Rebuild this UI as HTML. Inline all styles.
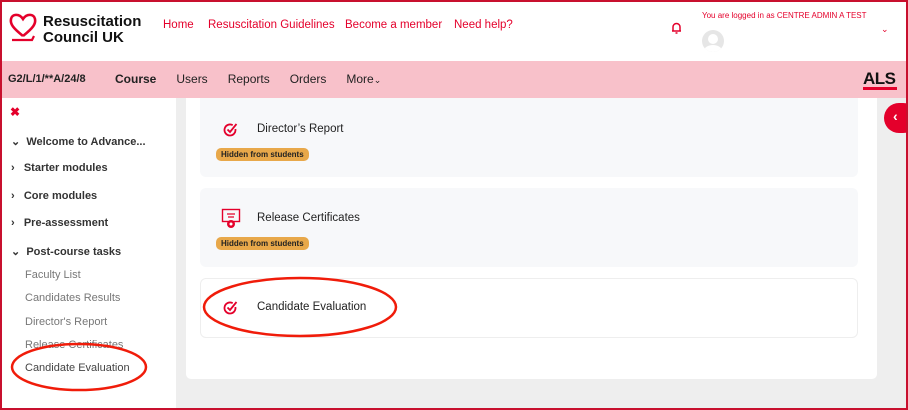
<!DOCTYPE html>
<html><head><style>
*{box-sizing:border-box;margin:0;padding:0}
body{width:908px;height:410px;overflow:hidden;font-family:"Liberation Sans",sans-serif;background:#fff;position:relative}
.frame{position:absolute;inset:0;border:2px solid #c8102e;z-index:50;pointer-events:none}
.hdr{position:absolute;left:0;top:0;width:908px;height:61px;background:#fff}
.nav{position:absolute;left:0;top:61px;width:908px;height:37px;background:#f8c1ca}
.abs{position:absolute;white-space:nowrap}
.side{position:absolute;left:0;top:98px;width:176px;height:312px;background:#fff}
.main{position:absolute;left:176px;top:98px;width:732px;height:312px;background:#eeeeee}
.panel{position:absolute;left:186px;top:98px;width:691px;height:281px;background:#fff;border-radius:0 0 5px 5px}
.card{position:absolute;left:200px;width:658px;background:#f7f8fa;border-radius:6px}
.badge{position:absolute;left:16px;background:#e8a84a;color:#222;font-size:8px;font-weight:bold;padding:2px 5px;border-radius:5px}
.t{font-size:11.5px;color:#222}
.sl{font-size:11px;color:#333;font-weight:bold}
.ss{font-size:11px;color:#777}
.hn{position:absolute;top:19px;font-size:11.5px;color:#e4002b;white-space:nowrap}
</style></head><body>
<div class="hdr"></div>
<svg class="abs" style="left:8px;top:12px" width="30" height="34" viewBox="0 0 30 34"><path d="M15 24 C5 16 2 12 3 7 C4 2 11 1 15 7 C19 1 26 2 27 7 C28 12 25 16 15 24" fill="none" stroke="#e4002b" stroke-width="2.6"/><path d="M4 28 H24 L26 24" fill="none" stroke="#e4002b" stroke-width="2.2"/></svg>
<div class="abs" style="left:43px;top:14px;font-size:15px;font-weight:bold;line-height:16px;color:#111">Resuscitation<br>Council UK</div>
<div class="hn" style="left:163px">Home</div>
<div class="hn" style="left:208px">Resuscitation Guidelines</div>
<div class="hn" style="left:345px">Become a member</div>
<div class="hn" style="left:454px">Need help?</div>
<svg class="abs" style="left:671px;top:22px" width="11" height="12" viewBox="0 0 11 12"><path d="M2 9 V5 a3.5 3.5 0 0 1 7 0 V9 H1 H10 M4.5 11 H6.5" fill="none" stroke="#e4002b" stroke-width="1.5"/></svg>
<div class="abs" style="left:702px;top:11px;font-size:8px;color:#e4002b">You are logged in as CENTRE ADMIN A TEST</div>
<div class="abs" style="left:702px;top:30px;width:22px;height:22px;border-radius:50%;background:#e6e6e6;overflow:hidden"><div style="position:absolute;left:6px;top:4px;width:10px;height:10px;border-radius:50%;background:#fff"></div><div style="position:absolute;left:2px;top:15px;width:18px;height:12px;border-radius:50%;background:#fff"></div></div>
<div class="abs" style="left:881px;top:24px;font-size:9px;color:#e4002b">⌄</div>
<div class="nav"></div>
<div class="abs" style="left:8px;top:73px;font-size:11px;font-weight:bold;color:#222">G2/L/1/**A/24/8</div>
<div class="abs" style="left:115px;top:72px;font-size:12px;color:#222"><b>Course</b>&nbsp;&nbsp;&nbsp;&nbsp;&nbsp;&nbsp;Users&nbsp;&nbsp;&nbsp;&nbsp;&nbsp;&nbsp;Reports&nbsp;&nbsp;&nbsp;&nbsp;&nbsp;&nbsp;Orders&nbsp;&nbsp;&nbsp;&nbsp;&nbsp;&nbsp;More<span style="font-size:9px">⌄</span></div>
<div class="abs" style="left:863px;top:69px;font-size:17px;font-weight:bold;color:#111;letter-spacing:-0.5px">ALS</div>
<div class="abs" style="left:863px;top:87px;width:34px;height:3px;background:#e4002b"></div>
<div class="side"></div>
<div class="abs" style="left:10px;top:105px;font-size:12px;color:#e4002b;font-weight:bold">✖</div>
<div class="abs sl" style="left:11px;top:135px">⌄&nbsp;&nbsp;Welcome to Advance...</div>
<div class="abs sl" style="left:11px;top:162px">›&nbsp;&nbsp;&nbsp;Starter modules</div>
<div class="abs sl" style="left:11px;top:190px">›&nbsp;&nbsp;&nbsp;Core modules</div>
<div class="abs sl" style="left:11px;top:217px">›&nbsp;&nbsp;&nbsp;Pre-assessment</div>
<div class="abs sl" style="left:11px;top:245px">⌄&nbsp;&nbsp;Post-course tasks</div>
<div class="abs ss" style="left:25px;top:269px">Faculty List</div>
<div class="abs ss" style="left:25px;top:292px">Candidates Results</div>
<div class="abs ss" style="left:25px;top:316px">Director's Report</div>
<div class="abs ss" style="left:25px;top:339px">Release Certificates</div>
<div class="abs ss" style="left:25px;top:362px;color:#444">Candidate Evaluation</div>
<div class="main"></div>
<div class="panel"></div>
<div class="card" style="top:98px;height:79px;border-radius:0 0 6px 6px">
<svg class="abs" style="left:22px;top:23px" width="17" height="17" viewBox="0 0 17 17"><path d="M10.7 4.2 A5.5 5.5 0 1 0 13.4 8" fill="none" stroke="#e4002b" stroke-width="1.8"/><path d="M5.5 8.5 L8 11 L14.5 3" fill="none" stroke="#e4002b" stroke-width="1.8"/></svg>
<div class="abs t" style="left:57px;top:25px">Director’s Report</div>
<div class="badge" style="top:50px">Hidden from students</div></div>
<div class="card" style="top:188px;height:79px">
<svg class="abs" style="left:21px;top:20px" width="20" height="22" viewBox="0 0 20 22"><rect x="1.5" y="1.5" width="17" height="12" fill="none" stroke="#e4002b" stroke-width="1.4"/><path d="M6 6 H14 M7 9 H13" stroke="#e4002b" stroke-width="1.2"/><circle cx="10" cy="16" r="4" fill="#e4002b"/><circle cx="10" cy="16" r="1.5" fill="#fff"/></svg>
<div class="abs t" style="left:57px;top:24px">Release Certificates</div>
<div class="badge" style="top:49px">Hidden from students</div></div>
<div class="card" style="top:278px;height:60px;background:#fff;border:1px solid #eee">
<svg class="abs" style="left:21px;top:20px" width="17" height="17" viewBox="0 0 17 17"><path d="M10.7 4.2 A5.5 5.5 0 1 0 13.4 8" fill="none" stroke="#e4002b" stroke-width="1.8"/><path d="M5.5 8.5 L8 11 L14.5 3" fill="none" stroke="#e4002b" stroke-width="1.8"/></svg>
<div class="abs t" style="left:56px;top:22px">Candidate Evaluation</div></div>
<div class="abs" style="left:884px;top:103px;width:34px;height:30px;border-radius:15px;background:#e4002b;color:#fff;font-weight:bold;font-size:14px;padding:5px 0 0 9px">‹</div>
<svg class="abs" style="left:0;top:0;z-index:40" width="908" height="410"><ellipse cx="300" cy="307" rx="96" ry="29" fill="none" stroke="#f01c0a" stroke-width="2.5"/><ellipse cx="79" cy="367" rx="67" ry="23" fill="none" stroke="#f01c0a" stroke-width="2.5"/></svg>
<div class="frame"></div>
</body></html>
